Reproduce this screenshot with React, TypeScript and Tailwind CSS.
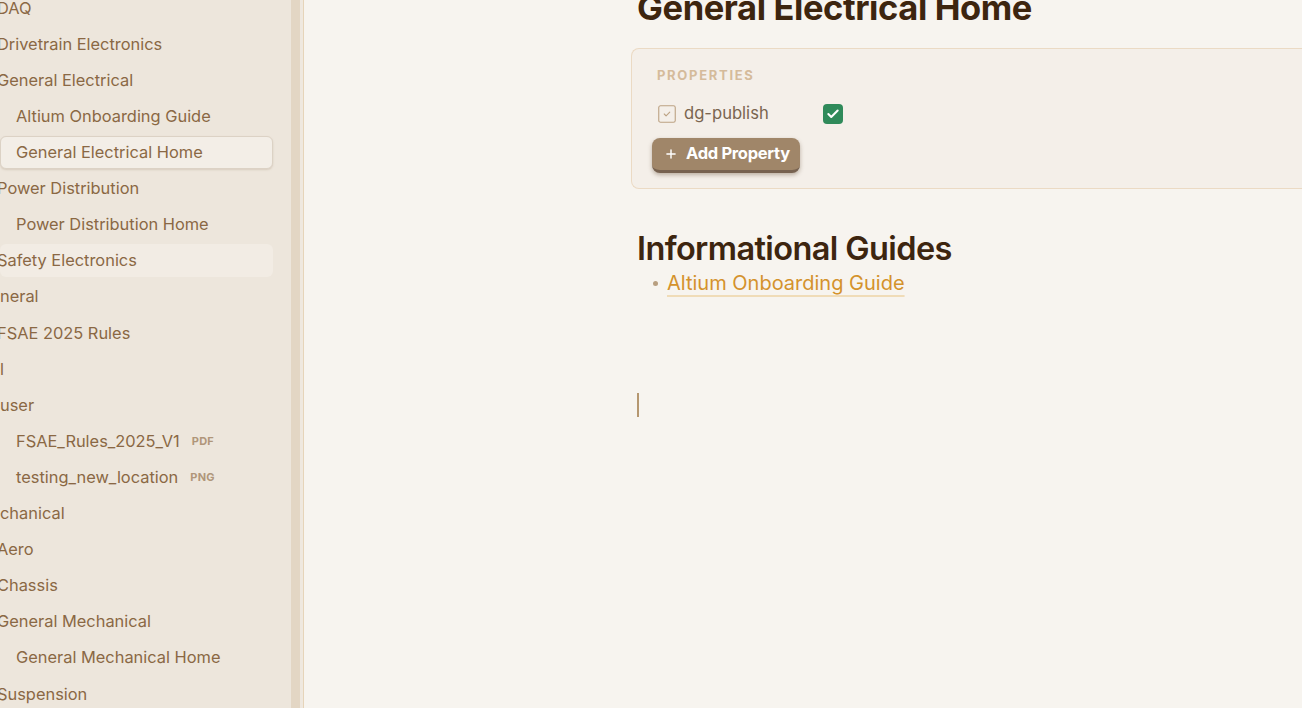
import { Check, Plus, SquareCheck } from "lucide-react";

type Item = { label: string; level: 0 | 1 | 2; active?: boolean; hover?: boolean; ext?: string };

const items: Item[] = [
  { label: "DAQ", level: 1 },
  { label: "Drivetrain Electronics", level: 1 },
  { label: "General Electrical", level: 1 },
  { label: "Altium Onboarding Guide", level: 2 },
  { label: "General Electrical Home", level: 2, active: true },
  { label: "Power Distribution", level: 1 },
  { label: "Power Distribution Home", level: 2 },
  { label: "Safety Electronics", level: 1, hover: true },
  { label: "neral", level: 0 },
  { label: "FSAE 2025 Rules", level: 1 },
  { label: "l", level: 0 },
  { label: "user", level: 0 },
  { label: "FSAE_Rules_2025_V1", level: 2, ext: "PDF" },
  { label: "testing_new_location", level: 2, ext: "PNG" },
  { label: "chanical", level: 0 },
  { label: "Aero", level: 1 },
  { label: "Chassis", level: 1 },
  { label: "General Mechanical", level: 1 },
  { label: "General Mechanical Home", level: 2 },
  { label: "Suspension", level: 1 },
];

// text offsets: level 1 is scrolled partly out of view
const indent = { 0: "ml-0", 1: "-ml-[3px]", 2: "ml-[16px]" };

const SidebarRow = ({ item }: { item: Item }) => (
  <div className="flex h-[36.1px] items-center pr-[18px]">
    <div
      className={
        "flex h-[33px] w-full items-center gap-3 rounded-md text-[16.4px]" +
        (item.active
          ? " border border-[#dcd2c5] bg-[#f3eee7] shadow-[0_1px_2px_rgba(120,90,60,0.18)]"
          : item.hover
          ? " bg-[#f2ece4]"
          : "")
      }
    >
      <span
        className={
          "whitespace-nowrap text-[#8a6844] " + (item.active ? "ml-[15px]" : indent[item.level])
        }
      >
        {item.label}
      </span>
      {item.ext && (
        <span className="text-[11px] font-bold tracking-wide text-[#b0967a]">{item.ext}</span>
      )}
    </div>
  </div>
);

export default function App() {
  return (
    <div className="flex h-[708px] w-[1302px] overflow-hidden bg-[#f7f4ef] font-['Inter','Noto_Sans',sans-serif]">
      <aside className="flex h-full shrink-0">
        <div className="h-full w-[291px] overflow-hidden bg-[#ede6dc]">
          <div className="-mt-[10px]">
            {items.map((item) => (
              <SidebarRow key={item.label} item={item} />
            ))}
          </div>
        </div>
        <div className="h-full w-[9px] bg-[#e3d6c4]" />
        <div className="h-full w-[3px] bg-[#efe8df]" />
        <div className="h-full w-px bg-[#e6d4b9]" />
      </aside>

      <main className="flex-1 pl-[333px]">
        <h1 className="-mt-[14px] text-[34.5px] font-bold leading-[44px] tracking-[-0.4px] text-[#3d250f]">
          General Electrical Home
        </h1>
        <section className="-ml-[6px] mt-[18px] h-[141px] rounded-l-lg border border-r-0 border-[#ebdac4] bg-[#f4efe9] pl-[25px] pt-[17px]">
          <div className="text-[13px] font-bold tracking-[1.7px] text-[#d5bb9b]">PROPERTIES</div>
          <div className="mt-[18px] flex h-[20px] items-center">
            <SquareCheck size={22} strokeWidth={1.2} className="-ml-[1px] text-[#bca283]" />
            <span className="ml-[6px] w-[139px] text-[16.6px] text-[#7a6550]">dg-publish</span>
            <span className="flex h-[20px] w-[20px] items-center justify-center rounded-[4px] bg-[#2f8a5a]">
              <Check size={14} strokeWidth={3.5} className="text-white" />
            </span>
          </div>
          <button className="-ml-[5px] mt-[14px] flex h-[35px] items-center gap-2 rounded-lg border-b-[3px] border-[#776250] bg-[#a08669] pl-[12px] pr-[10px] text-[16.5px] font-bold tracking-[-0.3px] text-white shadow-[0_2px_4px_rgba(80,55,30,0.35)]">
            <Plus size={14} strokeWidth={2.5} />
            Add Property
          </button>
        </section>

        <h2 className="mt-[40px] text-[32.5px] font-semibold leading-[40px] tracking-[-0.6px] text-[#3d250f]">
          Informational Guides
        </h2>
        <ul className="pl-[16px]">
          <li className="flex items-center gap-[9px] text-[20px] leading-[28px]">
            <span className="h-[5px] w-[5px] rounded-full bg-[#b89f80]" />
            <span className="text-[#d4922c] underline decoration-[#f0dcb8] decoration-2 underline-offset-[5px]">
              Altium Onboarding Guide
            </span>
          </li>
        </ul>
        <div className="mt-[96px] h-[24px] w-[2px] bg-[#b59770]" />
      </main>
    </div>
  );
}
